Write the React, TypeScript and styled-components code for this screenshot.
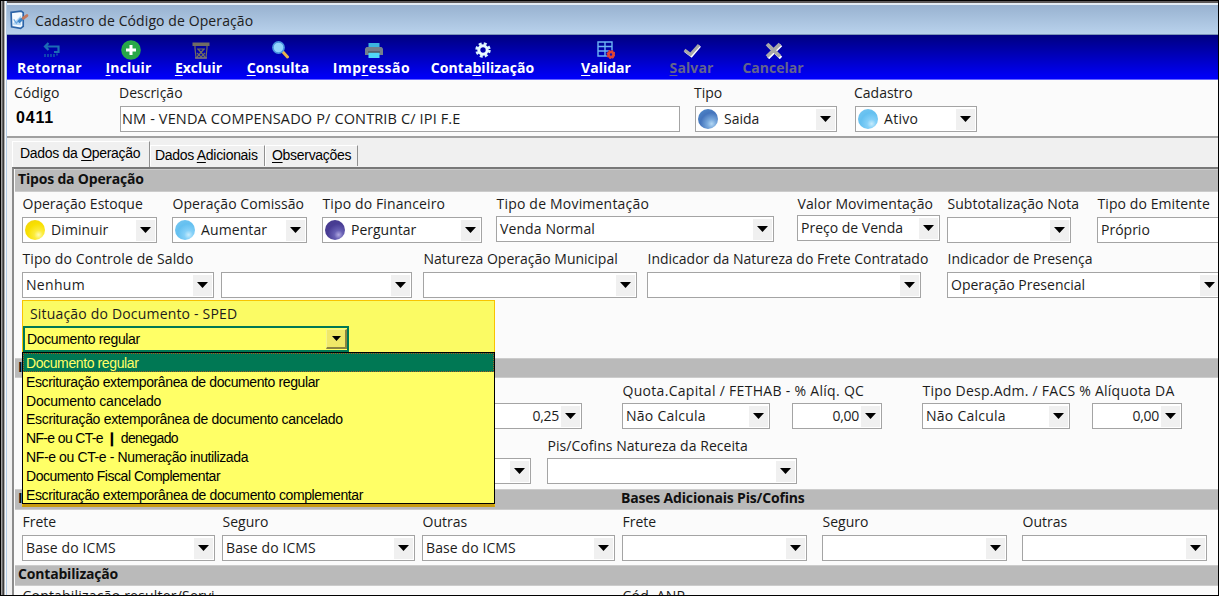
import React from 'react';
import styled, { createGlobalStyle, css } from 'styled-components';

type BallColor = 'blue' | 'sky' | 'yellow' | 'purple';

interface FieldProps {
    label?: string;
    width: number;
    gap?: number;
    lift?: number;
    value?: string;
    ball?: BallColor;
    spacing?: number;
    valueSpacing?: number;
    numeric?: boolean;
}

interface ToolProps {
    width: number;
    gap?: number;
    shift?: number;
    spacing?: number;
    disabled?: boolean;
    icon: React.ReactNode;
    children: React.ReactNode;
}

const BALLS: Record<BallColor, string> = {
    blue: 'radial-gradient(circle at 68% 74%, #b4d8f4 0%, #78a8dc 22%, #4474bc 55%, #4a80c4 75%, #8cbcec 100%)',
    sky: 'radial-gradient(circle at 68% 74%, #c8ecfc 0%, #84d0f8 22%, #64c0f0 55%, #70c4f0 78%, #9cd4f4 100%)',
    yellow: 'radial-gradient(circle at 68% 74%, #fffcb4 0%, #fcec3c 22%, #f8e000 55%, #f4d808 75%, #f0a818 100%)',
    purple: 'radial-gradient(circle at 68% 74%, #b0a8e0 0%, #6860b4 22%, #483c94 55%, #483c90 75%, #7c74bc 100%)',
};

const SPED_OPTIONS = [
    { text: 'Documento regular', spacing: -0.39 },
    { text: 'Escrituração extemporânea de documento regular', spacing: -0.39 },
    { text: 'Documento cancelado', spacing: -0.22 },
    { text: 'Escrituração extemporânea de documento cancelado', spacing: -0.31 },
    { text: 'NF-e ou CT-e ❙ denegado', spacing: -0.65 },
    { text: 'NF-e ou CT-e - Numeração inutilizada', spacing: -0.38 },
    { text: 'Documento Fiscal Complementar', spacing: -0.47 },
    { text: 'Escrituração extemporânea de documento complementar', spacing: -0.38 },
];

const GlobalStyle = createGlobalStyle`
    * {
        box-sizing: border-box;
    }
    body {
        margin: 0;
        overflow: hidden;
        font-family: 'Open Sans', 'Noto Sans', sans-serif;
        font-size: 14px;
        color: #1c1c1c;
    }
`;

const sansSerifFont = css`
    font-family: 'Liberation Sans', Arial, sans-serif;
    color: #000;
`;

const Frame = styled.div`
    display: flex;
    width: 1219px;
    height: 596px;
    border: 1px solid #000;
    background: #fbfbfb;
    overflow: hidden;
`;

const LeftEdge = styled.div`
    flex: none;
    width: 6px;
    background: linear-gradient(
        90deg,
        #a0a0a0 0 1px,
        #686868 1px 2px,
        #3c3c3c 2px 3px,
        #b0b0b0 3px 4px,
        #f4f8fc 4px 5px,
        #b4cce4 5px 6px
    );
`;

const Window = styled.div`
    flex: 1;
    min-width: 0;
    display: flex;
    flex-direction: column;
    border-top: 2px solid #5c5858;
`;

const TitleBar = styled.header`
    flex: none;
    display: flex;
    align-items: center;
    gap: 6px;
    height: 32px;
    padding: 1px 0 0 2px;
    border-top: 2px solid #e4ecf4;
    border-bottom: 1px solid #7c94b8;
    background: linear-gradient(#98b2d0, #b9d2ec);
    color: #202020;
    letter-spacing: 0.1px;
    white-space: nowrap;
`;

const Toolbar = styled.nav`
    flex: none;
    display: flex;
    height: 45px;
    padding: 5px 0 0 10px;
    border-bottom: 1px solid #6464fc;
    background: linear-gradient(#000080, #0000fc);
`;

const ToolButton = styled.div<{ $width: number; $gap: number; $disabled?: boolean; $spacing: number }>`
    flex: none;
    display: flex;
    flex-direction: column;
    align-items: center;
    width: ${props => props.$width}px;
    margin-left: ${props => props.$gap}px;
    font-size: 14px;
    font-weight: 700;
    line-height: 16px;
    letter-spacing: ${props => props.$spacing}px;
    white-space: nowrap;
    color: ${props => (props.$disabled ? '#64648c' : '#fff')};
    u {
        text-underline-offset: 2px;
    }
`;

const ToolIcon = styled.div<{ $shift: number }>`
    display: flex;
    align-items: center;
    height: 20px;
    padding-left: ${props => props.$shift}px;
`;

const FieldBox = styled.div<{ $width: number; $gap: number }>`
    flex: none;
    width: ${props => props.$width}px;
    margin-left: ${props => props.$gap}px;
`;

const Label = styled.div<{ $lift: number; $spacing: number }>`
    height: ${props => 25 - props.$lift}px;
    padding-left: 0.5px;
    letter-spacing: ${props => props.$spacing}px;
    white-space: nowrap;
`;

const Identity = styled.section`
    flex: none;
    display: flex;
    height: 56px;
    padding-left: 7px;
    background: #fbfbfb;
    line-height: 26px;
    ${Label} {
        margin-left: -1.5px;
    }
`;

const Code = styled.div`
    width: 106px;
    strong {
        ${sansSerifFont}
        display: block;
        padding-left: 2px;
        font-size: 16px;
        line-height: 23px;
        letter-spacing: 0.8px;
    }
`;

const TabStrip = styled.div`
    flex: none;
    display: flex;
    align-items: flex-start;
    height: 31px;
    padding: 3px 0 0 5px;
    border-top: 2px solid #a0a0a0;
    background: #f0f0f0;
`;

const Tab = styled.div<{ $width: number; $active?: boolean; $inset?: number }>`
    ${sansSerifFont}
    flex: none;
    width: ${props => props.$width}px;
    height: ${props => (props.$active ? 26 : 21)}px;
    margin-top: ${props => (props.$active ? 0 : 4)}px;
    padding-left: ${props => props.$inset ?? 7}px;
    border-top: 1px solid #fff;
    border-right: 1px solid #909090;
    border-left: 1px solid #fff;
    line-height: ${props => (props.$active ? 22 : 19)}px;
    font-size: 14px;
    letter-spacing: -0.3px;
    white-space: nowrap;
    u {
        text-underline-offset: 2px;
    }
`;

const Sheet = styled.main`
    flex: 1;
    display: flex;
    flex-direction: column;
    margin-left: 5px;
    border-top: 2px solid #787878;
    border-left: 2px solid #8c8c8c;
    box-shadow: -5px 0 0 #f0f0f0;
    background: #fbfbfb;
`;

const Band = styled.h2<{ $height: number }>`
    flex: none;
    display: grid;
    grid-template-columns: 603px 1fr;
    align-items: center;
    height: ${props => props.$height}px;
    margin: 0 0 0 1px;
    padding: 0 0 3px 3px;
    border-top: 1px solid #ccc;
    border-bottom: 1px solid #ccc;
    background: #bababa;
    color: #101010;
    font-size: 14px;
    font-weight: 700;
    line-height: 16px;
    letter-spacing: -0.18px;
    white-space: nowrap;
`;

const Group = styled.section<{ $height?: number; $labelLine?: number }>`
    flex: none;
    height: ${props => (props.$height ? `${props.$height}px` : 'auto')};
    padding-left: 8px;
    line-height: ${props => props.$labelLine ?? 24}px;
`;

const Row = styled.div`
    display: flex;
    align-items: flex-start;
    height: 55px;
`;

const Combo = styled.div<{ $numeric?: boolean; $spacing: number }>`
    display: flex;
    align-items: center;
    justify-content: ${props => (props.$numeric ? 'flex-end' : 'flex-start')};
    height: 26px;
    padding: 1px 1px 1px 3px;
    border: 1px solid #a4a4a4;
    background: #fff;
    line-height: 20px;
    letter-spacing: ${props => props.$spacing}px;
    white-space: nowrap;
`;

const Ball = styled.span<{ $color: BallColor }>`
    flex: none;
    width: 20px;
    height: 20px;
    margin: 0 6px 0 -1px;
    border-radius: 50%;
    background: ${props => BALLS[props.$color]};
`;

const DropButton = styled.span<{ $numeric?: boolean }>`
    flex: none;
    display: grid;
    place-items: center;
    width: 19px;
    height: 21px;
    margin-left: ${props => (props.$numeric ? '2px' : 'auto')};
    background: #f0f0f0;
`;

const TextInput = styled.div`
    height: 26px;
    padding-left: 1px;
    border: 1px solid #a4a4a4;
    background: #fff;
    line-height: 23px;
    font-size: 14.5px;
    letter-spacing: 0.14px;
    white-space: nowrap;
`;

const SpedAnchor = styled.div`
    position: relative;
    width: 473px;
`;

const SpedPanel = styled.div`
    position: absolute;
    top: -2px;
    left: 0;
    z-index: 1;
    width: 473px;
    height: 207px;
    border: 1px solid #f8c400;
    border-bottom: 3px solid #c89c10;
    background: #fbfb64;
`;

const SpedLabel = styled.div`
    height: 25px;
    padding-left: 7px;
    line-height: 26px;
    letter-spacing: 0.18px;
`;

const SpedCombo = styled.div`
    ${sansSerifFont}
    display: flex;
    align-items: center;
    justify-content: space-between;
    width: 326px;
    height: 26px;
    padding-left: 2px;
    border: 2px solid #007854;
    background: #ffff66;
    font-size: 14px;
    letter-spacing: -0.37px;
`;

const SpedButton = styled.span`
    display: grid;
    place-items: center;
    width: 21px;
    height: 20px;
    border: 1px solid #f4f490;
    border-right: 2px solid #8c8440;
    border-bottom: 2px solid #8c8440;
    background: #f0e868;
`;

const SpedList = styled.ul`
    ${sansSerifFont}
    margin: 0 -1px;
    padding: 0;
    border: 1px solid #000;
    background: #ffff66;
    list-style: none;
    font-size: 14px;
`;

const SpedOption = styled.li<{ $selected?: boolean; $spacing: number }>`
    height: 18.8px;
    padding-left: 3px;
    line-height: 20px;
    letter-spacing: ${props => props.$spacing}px;
    white-space: nowrap;
    ${props =>
        props.$selected &&
        css`
            color: #ffff66;
            background: #007854;
            outline: 1px dotted #a05c20;
            outline-offset: -1px;
        `}
`;

const ArrowDown = ({ small }: { small?: boolean }) => (
    <svg width={small ? 9 : 11} height={small ? 5 : 6} viewBox="0 0 11 6" preserveAspectRatio="none">
        <path d="M0 0h11L5.5 6z" fill="#000" />
    </svg>
);

const FormIcon = () => (
    <svg width="20" height="20" viewBox="0 0 19 19">
        <path d="M2 2.2 11.5 1l2 1.5v13L11 17.5 2.5 16z" fill="#f4faff" stroke="#2c64a8" strokeWidth="1.6" />
        <path d="M4 12.5 11.500 5v9.500L4 14z" fill="#b8d8f4" />
        <path d="m4.500 9 2.500 3.500L11 7.500" fill="none" stroke="#6ca8e0" strokeWidth="1.200" />
        <path d="m9 11.500 5-4" stroke="#3c84c8" strokeWidth="2.600" />
        <path d="m13.500 7.800 3.500-2.500" stroke="#c4785c" strokeWidth="2.800" strokeLinecap="round" />
    </svg>
);

const ReturnIcon = () => (
    <svg width="18" height="16" viewBox="0 0 18 16">
        <path d="M5.500 1 2 4.500 5.500 8M2.500 4.500H15.500V10H11" fill="none" stroke="#1c6cb4" strokeWidth="2.200" />
        <path d="M2 12v3M5 12v3M8 12v3M11 12v3M14 11.500v2" stroke="#1458b0" strokeWidth="1.500" />
    </svg>
);

const AddIcon = () => (
    <svg width="20" height="20" viewBox="0 0 20 20">
        <circle cx="10" cy="10" r="9.800" fill="#28a848" />
        <path d="M10 5v10M5 10h10" stroke="#fff" strokeWidth="3" />
    </svg>
);

const TrashIcon = () => (
    <svg width="18" height="17" viewBox="0 0 18 17">
        <path d="M.500.500h17V4h-17z" fill="#706c64" />
        <path d="M3 4v2l1 10h10l1-10V4M5 15l7-8M13 15 6 7M5 7h8M5 11l4 4 4-4" fill="none" stroke="#706c60" strokeWidth="1.200" />
        <path d="M3 16h12" stroke="#8c8878" />
    </svg>
);

const SearchIcon = () => (
    <svg width="19" height="18" viewBox="0 0 19 18">
        <path d="m11.500 10.500 5 5.500" stroke="#e8b44c" strokeWidth="3" strokeLinecap="round" />
        <circle cx="7.500" cy="6.500" r="5.600" fill="#90d4fc" stroke="#4894e0" strokeWidth="1.600" />
    </svg>
);

const PrinterIcon = () => (
    <svg width="18" height="15" viewBox="0 0 18 15">
        <path d="M3.500 0h11v5h-11z" fill="#3cb4e0" />
        <path d="M0 5.500 1.500 4h15L18 5.500V12H0z" fill="#74808c" />
        <path d="M3.500 9.500h11V15h-11z" fill="#50d8f8" />
        <path d="M3 9h12" stroke="#38444c" />
    </svg>
);

const GearIcon = () => (
    <svg width="16" height="16" viewBox="0 0 16 16">
        <circle cx="8" cy="8" r="6.200" fill="none" stroke="#d8f4fc" strokeWidth="3" strokeDasharray="2.800 2.070" />
        <circle cx="8" cy="8" r="4.200" fill="none" stroke="#e8faff" strokeWidth="3" />
    </svg>
);

const GridIcon = () => (
    <svg width="18" height="18" viewBox="0 0 18 18">
        <path d="M1 1h14v14H1zM8 1v14M1 5.500h14M1 10h14" fill="none" stroke="#6cb4f4" strokeWidth="1.400" />
        <circle cx="14" cy="13.500" r="4.400" fill="#1010c0" />
        <circle cx="14" cy="13.500" r="2.500" fill="none" stroke="#e04434" strokeWidth="2.600" />
        <circle cx="14" cy="13.500" r="3.800" fill="none" stroke="#e04434" strokeWidth="1.500" strokeDasharray="1.600 1.384" />
    </svg>
);

const CheckIcon = () => (
    <svg width="18" height="15" viewBox="0 0 18 15">
        <path d="m2 8 6.500 5L17 3" fill="none" stroke="#fff" strokeWidth="2.600" />
        <path d="m1.500 7 6 4.500L16 2" fill="none" stroke="#a8a8a8" strokeWidth="3" />
    </svg>
);

const CancelIcon = () => (
    <svg width="18" height="17" viewBox="0 0 18 17">
        <path d="m3 3 13 13M16 3 3 16" stroke="#fff" strokeWidth="3.400" />
        <path d="m2 2 13 12.500M15 2 2 14.500" stroke="#a8a8a8" strokeWidth="3.800" />
    </svg>
);

const Tool: React.FC<ToolProps> = ({ width, gap = 0, shift = 0, spacing = 0, disabled, icon, children }) => (
    <ToolButton $width={width} $gap={gap} $disabled={disabled} $spacing={spacing}>
        <ToolIcon $shift={shift}>{icon}</ToolIcon>
        <span>{children}</span>
    </ToolButton>
);

const Field: React.FC<FieldProps> = ({
    label,
    width,
    gap = 0,
    lift = 0,
    value,
    ball,
    spacing = 0,
    valueSpacing = 0,
    numeric,
}) => (
    <FieldBox $width={width} $gap={gap}>
        <Label $lift={lift} $spacing={spacing}>
            {label}
        </Label>
        <Combo $numeric={numeric} $spacing={valueSpacing}>
            {ball && <Ball $color={ball} />}
            {value}
            <DropButton $numeric={numeric}>
                <ArrowDown />
            </DropButton>
        </Combo>
    </FieldBox>
);

const App: React.FC = () => {
    return (
        <Frame>
            <GlobalStyle />
            <LeftEdge />
            <Window>
                <TitleBar>
                    <FormIcon />
                    Cadastro de Código de Operação
                </TitleBar>
                <Toolbar>
                    <Tool width={65} shift={4} spacing={0.3} icon={<ReturnIcon />}>Retornar</Tool>
                    <Tool width={45} gap={24} shift={4} spacing={0.1} icon={<AddIcon />}><u>I</u>ncluir</Tool>
                    <Tool width={47} gap={24} shift={5} icon={<TrashIcon />}><u>E</u>xcluir</Tool>
                    <Tool width={62} gap={25} shift={4} spacing={0.1} icon={<SearchIcon />}><u>C</u>onsulta</Tool>
                    <Tool width={77} gap={24} shift={4} spacing={0.5} icon={<PrinterIcon />}>Imp<u>r</u>essão</Tool>
                    <Tool width={103} gap={21} spacing={0.05} icon={<GearIcon />}>Conta<u>b</u>ilização</Tool>
                    <Tool width={50} gap={47} icon={<GridIcon />}><u>V</u>alidar</Tool>
                    <Tool width={45} gap={38} spacing={0.1} disabled icon={<CheckIcon />}><u>S</u>alvar</Tool>
                    <Tool width={62} gap={28} shift={2} disabled icon={<CancelIcon />}>Cancelar</Tool>
                </Toolbar>
                <Identity>
                    <Code>
                        Código
                        <strong>0411</strong>
                    </Code>
                    <FieldBox $width={560} $gap={0}>
                        <Label $lift={-1} $spacing={0}>Descrição</Label>
                        <TextInput>NM - VENDA COMPENSADO P/ CONTRIB C/ IPI F.E</TextInput>
                    </FieldBox>
                    <Field label="Tipo" width={142} gap={15} lift={-1} ball="blue" value="Saida" />
                    <Field label="Cadastro" width={122} gap={18} lift={-1} ball="sky" value="Ativo" valueSpacing={0.3} />
                </Identity>
                <TabStrip>
                    <Tab $width={138} $active>Dados da <u>O</u>peração</Tab>
                    <Tab $width={115} $inset={4}>Dados <u>A</u>dicionais</Tab>
                    <Tab $width={93} $inset={6}><u>O</u>bservações</Tab>
                </TabStrip>
                <Sheet>
                    <Band $height={23}>Tipos da Operação</Band>
                    <Group $height={166}>
                        <Row>
                            <Field label="Operação Estoque" width={135} ball="yellow" value="Diminuir" valueSpacing={0.1} />
                            <Field label="Operação Comissão" width={135} gap={15} spacing={0.05} ball="sky" value="Aumentar" valueSpacing={0.1} />
                            <Field label="Tipo do Financeiro" width={160} gap={15} spacing={0.12} ball="purple" value="Perguntar" />
                            <Field label="Tipo de Movimentação" width={278} gap={14} lift={1} spacing={0.2} value="Venda Normal" valueSpacing={0.1} />
                            <Field label="Valor Movimentação" width={143} gap={23} lift={2} spacing={0.08} value="Preço de Venda" />
                            <Field label="Subtotalização Nota" width={124} gap={7} spacing={0.05} />
                            <Field label="Tipo do Emitente" width={150} gap={26} spacing={0.08} value="Próprio" />
                        </Row>
                        <Row>
                            <Field label="Tipo do Controle de Saldo" width={192} spacing={0.1} value="Nenhum" valueSpacing={0.3} />
                            <Field width={191} gap={7} />
                            <Field label="Natureza Operação Municipal" width={214} gap={11} />
                            <Field label="Indicador da Natureza do Frete Contratado" width={274} gap={10} />
                            <Field label="Indicador de Presença" width={274} gap={26} value="Operação Presencial" />
                        </Row>
                        <SpedAnchor>
                            <SpedPanel>
                                <SpedLabel>Situação do Documento - SPED</SpedLabel>
                                <SpedCombo>
                                    Documento regular
                                    <SpedButton>
                                        <ArrowDown small />
                                    </SpedButton>
                                </SpedCombo>
                                <SpedList>
                                    {SPED_OPTIONS.map(({ text, spacing }, index) => (
                                        <SpedOption key={text} $selected={index === 0} $spacing={spacing}>
                                            {text}
                                        </SpedOption>
                                    ))}
                                </SpedList>
                            </SpedPanel>
                        </SpedAnchor>
                    </Group>
                    <Band $height={20}>I</Band>
                    <Group $height={111} $labelLine={25}>
                        <Row>
                            <Field width={110} gap={450} value="0,25" numeric valueSpacing={-0.3} />
                            <Field label="Quota.Capital / FETHAB - % Alíq. QC" width={148} gap={40} spacing={0.3} value="Não Calcula" valueSpacing={0.25} />
                            <Field width={90} gap={22} value="0,00" numeric valueSpacing={-0.3} />
                            <Field label="Tipo Desp.Adm. / FACS % Alíquota DA" width={148} gap={40} spacing={0.24} value="Não Calcula" valueSpacing={0.25} />
                            <Field width={90} gap={22} value="0,00" numeric valueSpacing={-0.3} />
                        </Row>
                        <Row>
                            <Field width={109} gap={400} />
                            <Field label="Pis/Cofins Natureza da Receita" width={250} gap={16} spacing={0.05} />
                        </Row>
                    </Group>
                    <Band $height={21}>
                        <span>I</span>
                        <span>Bases Adicionais Pis/Cofins</span>
                    </Band>
                    <Group $height={55} $labelLine={23}>
                        <Row>
                            <Field label="Frete" width={193} value="Base do ICMS" valueSpacing={0.1} />
                            <Field label="Seguro" width={193} gap={7} value="Base do ICMS" valueSpacing={0.1} />
                            <Field label="Outras" width={193} gap={7} value="Base do ICMS" valueSpacing={0.1} />
                            <Field label="Frete" width={185} gap={7} />
                            <Field label="Seguro" width={185} gap={15} />
                            <Field label="Outras" width={185} gap={15} />
                        </Row>
                    </Group>
                    <Band $height={21}>Contabilização</Band>
                    <Group $labelLine={20}>
                        <Row>
                            <FieldBox $width={600} $gap={0}>
                                <Label $lift={0} $spacing={0.2}>Contabilização resulter/Servi</Label>
                            </FieldBox>
                            <FieldBox $width={200} $gap={0}>
                                <Label $lift={0} $spacing={0.2}>Cód. ANP</Label>
                            </FieldBox>
                        </Row>
                    </Group>
                </Sheet>
            </Window>
        </Frame>
    );
};

export default App;
